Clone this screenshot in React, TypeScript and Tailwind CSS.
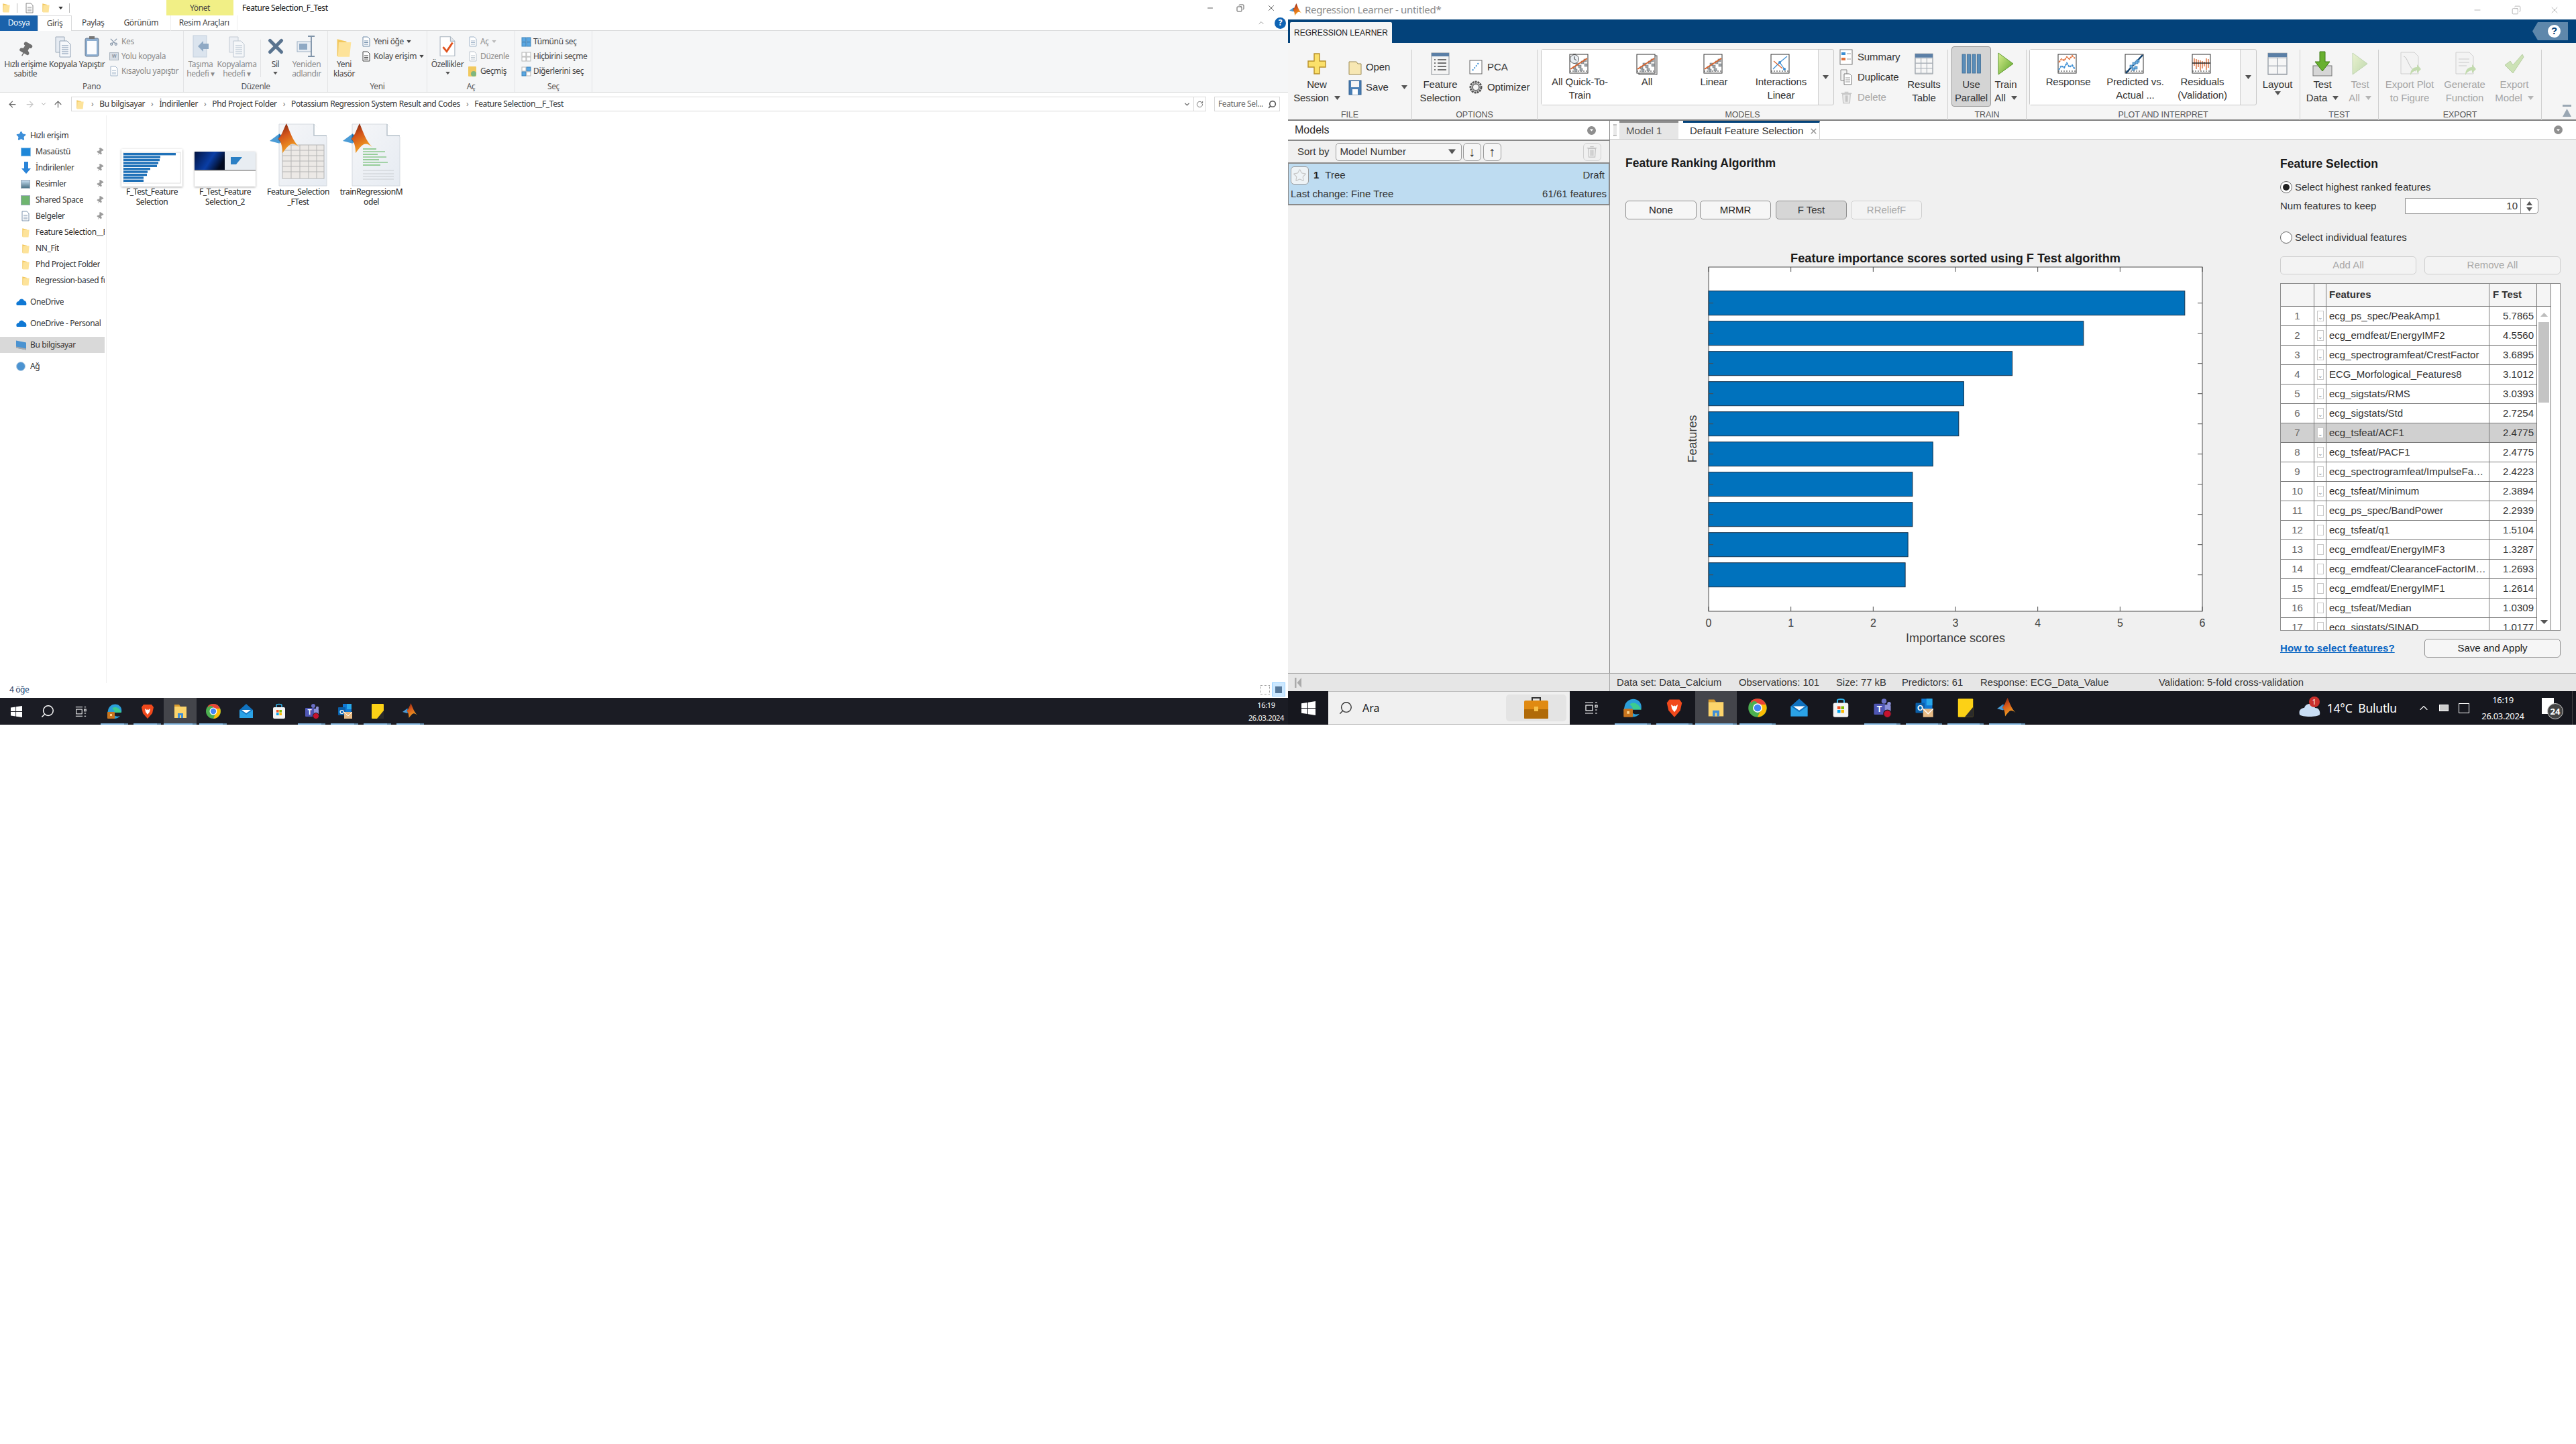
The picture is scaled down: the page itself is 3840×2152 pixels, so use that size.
import type { ReactNode } from "react"
import { Scissors, X, Search, ChevronUp, ChevronDown, ArrowLeft, ArrowRight, ArrowUp, RotateCw, Star, Pin, Minus, Copy } from "lucide-react"

const bars = [5.7865, 4.556, 3.6895, 3.1012, 3.0393, 2.7254, 2.4775, 2.4775, 2.4223, 2.3894]

const features = [
  ["ecg_ps_spec/PeakAmp1", "5.7865"],
  ["ecg_emdfeat/EnergyIMF2", "4.5560"],
  ["ecg_spectrogramfeat/CrestFactor", "3.6895"],
  ["ECG_Morfological_Features8", "3.1012"],
  ["ecg_sigstats/RMS", "3.0393"],
  ["ecg_sigstats/Std", "2.7254"],
  ["ecg_tsfeat/ACF1", "2.4775"],
  ["ecg_tsfeat/PACF1", "2.4775"],
  ["ecg_spectrogramfeat/ImpulseFa…", "2.4223"],
  ["ecg_tsfeat/Minimum", "2.3894"],
  ["ecg_ps_spec/BandPower", "2.2939"],
  ["ecg_tsfeat/q1", "1.5104"],
  ["ecg_emdfeat/EnergyIMF3", "1.3287"],
  ["ecg_emdfeat/ClearanceFactorIM…", "1.2693"],
  ["ecg_emdfeat/EnergyIMF1", "1.2614"],
  ["ecg_tsfeat/Median", "1.0309"],
  ["ecg_sigstats/SINAD", "1.0177"],
]

/* ---------- shared drawings ---------- */

function MatlabLogo({ size }: { size: number }) {
  return (
    <svg width={size} height={size} viewBox="0 0 100 100">
      <defs>
        <linearGradient id="mlPeak" x1="0" y1="0" x2="0.4" y2="1">
          <stop offset="0" stopColor="#6e1d10" />
          <stop offset="0.45" stopColor="#d4551a" />
          <stop offset="1" stopColor="#f5a623" />
        </linearGradient>
      </defs>
      <path d="M0 54 L30 32 L44 46 L30 62 Z" fill="#4b9cd6" />
      <path d="M30 32 L44 46 L36 62 L26 50 Z" fill="#1f6aa8" />
      <path d="M52 0 C62 22 70 52 92 74 C78 62 68 60 58 70 C50 78 44 86 40 92 C40 72 34 52 26 48 C38 38 44 14 52 0 Z" fill="url(#mlPeak)" />
    </svg>
  )
}

function Folder({ size = 20 }: { size?: number }) {
  return (
    <svg width={size} height={size} viewBox="0 0 20 26">
      <path d="M1 2 L13 5 L13 24 L1 24 Z" fill="#f2c75c" />
      <path d="M3 6 L19 6 L17 25 L2 25 Z" fill="#fde39a" />
    </svg>
  )
}

function Caret({ color = "#444", className = "" }: { color?: string; className?: string }) {
  return (
    <svg width="9" height="6" viewBox="0 0 9 6" className={className}>
      <path d="M0 0 H9 L4.5 6 Z" fill={color} />
    </svg>
  )
}

function Doc({ w = 22, h = 28, children }: { w?: number; h?: number; children?: ReactNode }) {
  return (
    <svg width={w} height={h} viewBox="0 0 22 28">
      <path d="M1 1 H15 L21 7 V27 H1 Z" fill="#fff" stroke="#a9b4bf" />
      <path d="M15 1 V7 H21" fill="#e4e8ec" stroke="#a9b4bf" />
      {children}
    </svg>
  )
}

function Trash({ size = 22, color = "#c4c4c4" }: { size?: number; color?: string }) {
  return (
    <svg width={size} height={size} viewBox="0 0 22 22">
      <path d="M5 6 H17 L16 20 H6 Z" fill="#eee" stroke={color} strokeWidth="1.4" />
      <path d="M3 5 H19 M8 3 H14 M9 8 V18 M11 8 V18 M13 8 V18" stroke={color} strokeWidth="1.4" />
    </svg>
  )
}

/* ---------- explorer ribbon icons ---------- */

function PagesIcon({ faded = false }: { faded?: boolean }) {
  return (
    <svg width="26" height="32" viewBox="0 0 26 32" opacity={faded ? 0.55 : 1}>
      <path d="M2 1 H15 L15 24 H2 Z" fill="#e6ebf2" stroke="#9aa8b8" />
      <path d="M8 7 H19 L24 12 V31 H8 Z" fill="#f6f8fb" stroke="#8fa0b3" />
      <path d="M11 14 H21 M11 17 H21 M11 20 H21 M11 23 H21 M11 26 H21" stroke="#7d93ad" />
    </svg>
  )
}

function ClipboardIcon() {
  return (
    <svg width="24" height="34" viewBox="0 0 24 34">
      <rect x="2" y="5" width="20" height="27" rx="2" fill="#8eaed0" stroke="#6c7f94" />
      <rect x="5" y="9" width="14" height="20" fill="#fbfcfe" />
      <path d="M8 6 V2 H16 V6 Z" fill="#777" />
    </svg>
  )
}

function PinIcon({ size = 22, color = "#6f6f6f" }: { size?: number; color?: string }) {
  return <Pin size={size} color={color} fill={color} strokeWidth={1.5} className="rotate-[30deg]" />
}

function MoveIcon({ faded = false }: { faded?: boolean }) {
  return (
    <svg width="28" height="34" viewBox="0 0 28 34" opacity={faded ? 0.8 : 1}>
      <rect x="3" y="1" width="20" height="32" fill="#dbe4ee" stroke="#c4d0dd" />
      <path d="M26 13 V21 H18 V25 L10 17 L18 9 V13 Z" fill="#8fa9c4" />
    </svg>
  )
}

function RenameIcon() {
  return (
    <svg width="30" height="34" viewBox="0 0 30 34">
      <rect x="1" y="10" width="21" height="15" fill="#e9eef4" stroke="#9db0c4" />
      <rect x="4" y="13" width="12" height="9" fill="#8fa9c4" />
      <path d="M22 2 V32 M17 2 H27 M17 32 H27" stroke="#7f93a8" strokeWidth="1.8" fill="none" />
    </svg>
  )
}

function PropsIcon() {
  return (
    <Doc w={24} h={34}>
      <path d="M5 15 L10 21 L18 9" stroke="#e0521d" strokeWidth="2.6" fill="none" />
    </Doc>
  )
}

function GridSelect({ mode }: { mode: "all" | "none" | "invert" }) {
  const cells = mode === "all" ? [1, 1, 1, 1] : mode === "none" ? [0, 0, 0, 0] : [0, 1, 1, 0]
  return (
    <svg width="15" height="15" viewBox="0 0 15 15">
      {cells.map((c, i) => (
        <rect key={i} x={i % 2 ? 8 : 1} y={i < 2 ? 1 : 8} width="6" height="6" fill={c ? "#5aa7e2" : "#fff"} stroke={c ? "#3f84bb" : "#b5b5b5"} />
      ))}
    </svg>
  )
}

function SmallDoc({ color = "#9fb3c8" }: { color?: string }) {
  return (
    <svg width="14" height="16" viewBox="0 0 14 16">
      <path d="M2 1 H9 L12 4 V15 H2 Z" fill="#fff" stroke={color} />
      <path d="M4 7 H10 M4 9.5 H10 M4 12 H10" stroke={color} />
    </svg>
  )
}

/* ---------- explorer parts ---------- */

function BigBtn({ w, icon, lines, muted = false, caret = false }: { w: string; icon: ReactNode; lines: string[]; muted?: boolean; caret?: boolean }) {
  return (
    <div className={`${w} flex flex-col items-center`}>
      <div className="h-[37px] flex items-end justify-center pb-[2px]">{icon}</div>
      <div className={`flex flex-col items-center mt-[1px] leading-[13.5px] whitespace-nowrap ${muted ? "text-[#8b8b8b]" : "text-[#444]"}`}>
        {lines.map((l, i) => (
          <span key={i}>{l}</span>
        ))}
        {caret && <Caret color="#555" className="mt-[3px] scale-75" />}
      </div>
    </div>
  )
}

function SmallBtn({ icon, text, muted = false, caret = false }: { icon: ReactNode; text: string; muted?: boolean; caret?: boolean }) {
  return (
    <div className={`h-[22px] flex items-center whitespace-nowrap ${muted ? "text-[#8b8b8b]" : "text-[#444]"}`}>
      <span className="w-[18px] flex items-center">{icon}</span>
      {text}
      {caret && <Caret color={muted ? "#bbb" : "#444"} className="ml-[3px] scale-75" />}
    </div>
  )
}

function RibbonGroup({ w, label, children }: { w: string; label: string; children: ReactNode }) {
  return (
    <div className={`${w} h-full border-r border-[#e2e3e5] flex flex-col shrink-0`}>
      <div className="h-[76px] flex pt-[5px]">{children}</div>
      <div className="text-center text-[#555] leading-[14px]">{label}</div>
    </div>
  )
}

function NavRow({ icon, text, indent = false, pin = false, active = false }: { icon: ReactNode; text: string; indent?: boolean; pin?: boolean; active?: boolean }) {
  return (
    <div className={`h-[24px] w-[156px] flex items-center ${indent ? "pl-[31px]" : "pl-[24px]"} ${active ? "bg-[#d9d9d9]" : ""}`}>
      <span className={`${indent ? "w-[22px]" : "w-[21px]"} shrink-0 flex items-center`}>{icon}</span>
      <span className="overflow-hidden whitespace-nowrap text-[#333] leading-[24px]">{text}</span>
      {pin && <span className="ml-auto mr-[1px] flex"><PinIcon size={12} color="#9a9a9a" /></span>}
    </div>
  )
}

function CloudIcon({ size = 16 }: { size?: number }) {
  return (
    <svg width={size} height={size} viewBox="0 0 16 16">
      <path d="M1 13 C-1 9 2 7 4 7 C5 3 10 2 12 6 C15 6 16 10 15 13 Z" fill="#0f78d4" />
    </svg>
  )
}

function FileThumbOne() {
  return (
    <svg width="91" height="56" viewBox="0 0 91 56" className="shadow-[0_1px_3px_rgba(0,0,0,0.35)] bg-white">
      <rect x="3" y="5" width="85" height="46" fill="none" stroke="#ddd" />
      {[78, 55, 54, 52, 50, 40, 36, 35, 30, 30].map((w, i) => (
        <rect key={i} x="3" y={6 + i * 4.4} width={w} height="3.4" fill="#1f71b8" />
      ))}
    </svg>
  )
}

function FileThumbTwo() {
  return (
    <svg width="91" height="52" viewBox="0 0 91 52" className="shadow-[0_1px_3px_rgba(0,0,0,0.35)] bg-white">
      <defs>
        <linearGradient id="thumbBlue" x1="0" y1="0" x2="1" y2="0.4">
          <stop offset="0" stopColor="#02133f" />
          <stop offset="0.6" stopColor="#0a3ea6" />
          <stop offset="1" stopColor="#020a20" />
        </linearGradient>
      </defs>
      <rect x="0" y="0" width="45" height="28" fill="url(#thumbBlue)" />
      <rect x="45" y="0" width="46" height="28" fill="#e8edf2" />
      <path d="M54 8 H71 L62 19 H54 Z" fill="#2b80c5" />
      <rect x="0" y="27" width="91" height="1.5" fill="#8a8a8a" />
    </svg>
  )
}

function MatlabFile({ table }: { table: boolean }) {
  return (
    <div className="relative w-[86px] h-[94px]">
      <svg width="86" height="94" viewBox="0 0 86 94">
        <defs>
          <linearGradient id="pageFill" x1="0" y1="0" x2="1" y2="1">
            <stop offset="0" stopColor="#f5f6f8" />
            <stop offset="1" stopColor="#e6ebf2" />
          </linearGradient>
        </defs>
        <path d="M14 1 H66 L85 20 V93 H14 Z" fill="url(#pageFill)" stroke="#d5dae0" />
        <path d="M66 1 V18 H85" fill="#fff" stroke="#b8c2cc" strokeWidth="1.5" />
        {table ? (
          <g stroke="#b5b5b5" fill="#ece9e6">
            <rect x="19" y="32" width="62" height="50" />
            {[40, 48, 56, 64, 72].map((y) => (
              <path key={y} d={`M19 ${y} H81`} />
            ))}
            {[32, 45, 58, 70].map((x) => (
              <path key={x} d={`M${x} 32 V82`} />
            ))}
          </g>
        ) : (
          <g>
            {[38, 42, 46, 50, 54, 58, 62].map((y, i) => (
              <path key={y} d={`M30 ${y} H${50 + (i * 13) % 24}`} stroke="#5db65d" strokeWidth="1.2" />
            ))}
            {[70, 75, 79, 83].map((y) => (
              <path key={y} d={`M30 ${y} H76`} stroke="#c9cdd2" strokeWidth="1.2" />
            ))}
          </g>
        )}
      </svg>
      <div className="absolute left-0 top-0">
        <MatlabLogo size={48} />
      </div>
    </div>
  )
}

function FileCell({ thumb, lines }: { thumb: ReactNode; lines: string[] }) {
  return (
    <div className="w-[109px] shrink-0 flex flex-col items-center">
      <div className="h-[95px] flex items-end justify-center">{thumb}</div>
      <div className="flex flex-col items-center leading-[15px] text-[#222] whitespace-nowrap">
        {lines.map((l) => (
          <span key={l}>{l}</span>
        ))}
      </div>
    </div>
  )
}

function Explorer() {
  return (
    <div className="w-[1920px] h-[1040px] flex flex-col font-['Noto_Sans',sans-serif] text-[12px] tracking-[-0.38px]">
      {/* title row */}
      <div className="h-[23px] flex items-center relative shrink-0">
        <div className="pl-[2px] w-[248px] flex items-center gap-[5px]">
          <Folder size={15} />
          <span className="w-px h-[14px] bg-[#bbb] ml-[3px]" />
          <span className="ml-[6px]"><SmallDoc color="#888" /></span>
          <span className="ml-[5px]"><Folder size={15} /></span>
          <Caret color="#333" className="ml-[5px] scale-75" />
          <span className="w-px h-[14px] bg-[#bbb] ml-[3px]" />
        </div>
        <div className="w-[100px] h-[23px] bg-[#f1ef86] flex items-center justify-center text-[#444]">Yönet</div>
        <div className="ml-[13px] text-[#111]">Feature Selection_F_Test</div>
        <div className="ml-auto flex items-center text-[#111]">
          <Minus size={12} strokeWidth={1.4} />
          <Copy size={12} strokeWidth={1.4} className="ml-[33px] -scale-x-100" />
          <X size={14} strokeWidth={1.2} className="ml-[33px] mr-[18px]" />
        </div>
      </div>

      {/* tab row */}
      <div className="h-[23px] flex items-center shrink-0 border-b border-[#dadbdc] text-[#444]">
        <div className="w-[56px] h-[23px] bg-[#1a62ab] text-white flex items-center justify-center">Dosya</div>
        <div className="w-[51px] h-[23px] bg-white border-x border-t border-[#dadbdc] flex items-center justify-center">Giriş</div>
        <div className="ml-[15px]">Paylaş</div>
        <div className="ml-[29px]">Görünüm</div>
        <div className="ml-[18px] w-[100px] h-[23px] border-l border-r border-[#eee] flex items-center justify-center">Resim Araçları</div>
        <ChevronUp size={12} color="#999" className="ml-auto mr-[14px]" />
        <span className="w-[17px] h-[17px] mr-[3px] rounded-full bg-[#0f63b3] text-white font-bold flex items-center justify-center text-[12px]">?</span>
      </div>

      {/* ribbon */}
      <div className="h-[92px] bg-[#f5f6f7] border-b border-[#dadbdc] flex shrink-0">
        <RibbonGroup w="w-[274px]" label="Pano">
          <div className="w-[5px]" />
          <BigBtn w="w-[66px]" icon={<PinIcon size={24} />} lines={["Hızlı erişime", "sabitle"]} />
          <BigBtn w="w-[46px]" icon={<PagesIcon />} lines={["Kopyala"]} />
          <BigBtn w="w-[40px]" icon={<ClipboardIcon />} lines={["Yapıştır"]} />
          <div className="ml-[6px]">
            <SmallBtn muted icon={<Scissors size={13} color="#7d8ea3" className="-rotate-90" />} text="Kes" />
            <SmallBtn muted icon={<span className="w-[14px] h-[12px] bg-[#d7dde5] border border-[#a9b4bf] text-[7px] leading-[10px] text-center text-[#5a6b7d]">W</span>} text="Yolu kopyala" />
            <SmallBtn muted icon={<SmallDoc />} text="Kısayolu yapıştır" />
          </div>
        </RibbonGroup>
        <RibbonGroup w="w-[215px]" label="Düzenle">
          <BigBtn muted w="w-[50px]" icon={<MoveIcon />} lines={["Taşıma", "hedefi ▾"]} />
          <BigBtn muted w="w-[58px]" icon={<PagesIcon faded />} lines={["Kopyalama", "hedefi ▾"]} />
          <div className="w-px h-[56px] bg-[#e2e3e5] ml-[6px] mt-[8px]" />
          <BigBtn w="w-[43px]" icon={<X size={34} strokeWidth={3.6} color="#59738f" />} lines={["Sil"]} caret />
          <BigBtn muted w="w-[50px]" icon={<RenameIcon />} lines={["Yeniden", "adlandır"]} />
        </RibbonGroup>
        <RibbonGroup w="w-[148px]" label="Yeni">
          <BigBtn w="w-[48px]" icon={<Folder size={30} />} lines={["Yeni", "klasör"]} />
          <div className="ml-[2px]">
            <SmallBtn caret icon={<SmallDoc color="#6d8aa8" />} text="Yeni öğe" />
            <SmallBtn caret icon={<SmallDoc color="#444" />} text="Kolay erişim" />
          </div>
        </RibbonGroup>
        <RibbonGroup w="w-[131px]" label="Aç">
          <BigBtn w="w-[60px]" icon={<PropsIcon />} lines={["Özellikler"]} caret />
          <div className="ml-[1px]">
            <SmallBtn muted caret icon={<SmallDoc />} text="Aç" />
            <SmallBtn muted icon={<SmallDoc color="#b8c2cc" />} text="Düzenle" />
            <SmallBtn icon={<span className="w-[12px] h-[15px] bg-[#f1c95f] block rounded-[1px]"><span className="block w-[8px] h-[8px] mt-[7px] ml-[4px] rounded-full bg-[#7fb77e]" /></span>} text="Geçmiş" />
          </div>
        </RibbonGroup>
        <RibbonGroup w="w-[115px]" label="Seç">
          <div className="pl-[9px]">
            <SmallBtn icon={<GridSelect mode="all" />} text="Tümünü seç" />
            <SmallBtn icon={<GridSelect mode="none" />} text="Hiçbirini seçme" />
            <SmallBtn icon={<GridSelect mode="invert" />} text="Diğerlerini seç" />
          </div>
        </RibbonGroup>
      </div>

      {/* address row */}
      <div className="h-[34px] flex items-center shrink-0 text-[#333]">
        <div className="w-[106px] flex items-center text-[#666]">
          <ArrowLeft size={15} className="ml-[11px]" />
          <ArrowRight size={15} color="#c6c6c6" className="ml-[11px]" />
          <ChevronDown size={10} color="#999" className="ml-[8px]" />
          <ArrowUp size={15} className="ml-[9px]" />
        </div>
        <div className="w-[1692px] h-[22px] border border-[#d9d9d9] flex items-center pl-[5px]">
          <Folder size={15} />
          <span className="mx-[9px] text-[#777]">›</span>Bu bilgisayar
          <span className="mx-[9px] text-[#777]">›</span>İndirilenler
          <span className="mx-[9px] text-[#777]">›</span>Phd Project Folder
          <span className="mx-[9px] text-[#777]">›</span>Potassium Regression System Result and Codes
          <span className="mx-[9px] text-[#777]">›</span>Feature Selection__F_Test
          <ChevronDown size={11} color="#666" strokeWidth={3} className="ml-auto mr-[4px]" />
          <span className="w-[18px] h-[20px] border-l border-[#d9d9d9] flex items-center justify-center">
            <RotateCw size={11} color="#666" />
          </span>
        </div>
        <div className="ml-[12px] w-[98px] h-[22px] border border-[#d9d9d9] flex items-center pl-[5px] text-[#666]">
          Feature Sel...
          <Search size={13} color="#555" strokeWidth={3} className="ml-auto mr-[4px] -scale-x-100" />
        </div>
      </div>

      {/* body */}
      <div className="flex-1 flex min-h-0">
        <div className="w-[159px] h-[846px] border-r border-[#f0f0f0] pt-[18px] shrink-0">
          <NavRow text="Hızlı erişim" icon={<Star size={15} color="#3d8fd9" fill="#3d8fd9" />} />
          <NavRow indent pin text="Masaüstü" icon={<span className="w-[15px] h-[13px] bg-[#1f87d8] block border border-[#8cc0e8]" />} />
          <NavRow indent pin text="İndirilenler" icon={<ArrowDownBlue />} />
          <NavRow indent pin text="Resimler" icon={<span className="w-[14px] h-[13px] bg-gradient-to-b from-[#c8dff2] to-[#4d7488] block border border-[#9aa8b8]" />} />
          <NavRow indent pin text="Shared Space" icon={<span className="w-[14px] h-[15px] bg-[#6fb56f] block border border-[#9aa8b8]" />} />
          <NavRow indent pin text="Belgeler" icon={<SmallDoc color="#7d93ad" />} />
          <NavRow indent text="Feature Selection__F" icon={<Folder size={15} />} />
          <NavRow indent text="NN_Fit" icon={<Folder size={15} />} />
          <NavRow indent text="Phd Project Folder" icon={<Folder size={15} />} />
          <NavRow indent text="Regression-based fu" icon={<Folder size={15} />} />
          <div className="h-[8px]" />
          <NavRow text="OneDrive" icon={<CloudIcon />} />
          <div className="h-[8px]" />
          <NavRow text="OneDrive - Personal" icon={<CloudIcon />} />
          <div className="h-[8px]" />
          <NavRow active text="Bu bilgisayar" icon={<span className="w-[15px] h-[11px] bg-[#4b93d1] block skew-y-12 border-b-2 border-[#aaa]" />} />
          <div className="h-[8px]" />
          <NavRow text="Ağ" icon={<span className="w-[14px] h-[14px] rounded-full bg-[#4b93d1] block border border-[#b3cde3]" />} />
        </div>
        <div className="flex-1 relative">
          <div className="flex pl-[13px] pt-[11px]">
            <FileCell thumb={<FileThumbOne />} lines={["F_Test_Feature", "Selection"]} />
            <FileCell thumb={<FileThumbTwo />} lines={["F_Test_Feature", "Selection_2"]} />
            <FileCell thumb={<MatlabFile table />} lines={["Feature_Selection", "_FTest"]} />
            <FileCell thumb={<MatlabFile table={false} />} lines={["trainRegressionM", "odel"]} />
          </div>
        </div>
      </div>

      {/* status */}
      <div className="h-[25px] flex items-center shrink-0 -mt-[25px] relative">
        <span className="ml-[14px] text-[#24416b]">4 öğe</span>
        <span className="ml-auto mr-[4px] flex items-center gap-[3px]">
          <span className="w-[14px] h-[14px] border border-dotted border-[#999]" />
          <span className="w-[20px] h-[21px] bg-[#cce8ff] border border-[#99d1ff] flex items-center justify-center">
            <span className="w-[10px] h-[10px] bg-[#56789a]" />
          </span>
        </span>
      </div>
    </div>
  )
}

function ArrowDownBlue() {
  return (
    <svg width="16" height="20" viewBox="0 0 16 20">
      <path d="M5 1 H11 V11 H15 L8 19 L1 11 H5 Z" fill="#2a84d8" />
    </svg>
  )
}

/* ---------- taskbar ---------- */

function WinLogo({ size }: { size: number }) {
  return (
    <svg width={size} height={size} viewBox="0 0 20 20">
      <path d="M0 3 L8.5 1.8 V9.5 H0 Z M9.5 1.6 L20 0 V9.5 H9.5 Z M0 10.5 H8.5 V18.2 L0 17 Z M9.5 10.5 H20 V20 L9.5 18.4 Z" fill="#fff" />
    </svg>
  )
}

function TaskViewIcon({ size }: { size: number }) {
  return (
    <svg width={size} height={size} viewBox="0 0 20 20" fill="none" stroke="#fff" strokeWidth="1.2">
      <path d="M1 2 H13 M1 18 H13" />
      <rect x="2" y="6" width="10" height="8" />
      <path d="M16 2 H19 M16 6 H19 V9 H16 Z M16 13 H19 M16 18 H19" />
    </svg>
  )
}

function AppIcon({ name, size }: { name: string; size: number }) {
  if (name === "edge")
    return (
      <svg width={size} height={size} viewBox="0 0 24 24">
        <path d="M2 11 C3 3 11 0 16 2 C21 4 23 8 22 14 L10 14 C10 18 14 21 20 19 C16 24 8 24 4 20 C1 17 1 14 2 11 Z" fill="#2b9fd9" />
        <path d="M8 8 C12 4 19 6 22 14 L12 14 C12 11 10 9 8 8 Z" fill="#3ccb8f" />
        <rect x="1" y="13" width="11" height="10" rx="1" fill="#c8741e" />
        <rect x="5" y="16" width="3" height="3" fill="#fbd38a" />
      </svg>
    )
  if (name === "brave")
    return (
      <svg width={size} height={size} viewBox="0 0 24 24">
        <path d="M6 2 H18 L21 6 L19 15 L12 23 L5 15 L3 6 Z" fill="#f1491c" />
        <path d="M8 8 L11 10 L12 9 L13 10 L16 8 L15 13 L12 17 L9 13 Z" fill="#fff" />
      </svg>
    )
  if (name === "explorer")
    return (
      <svg width={size} height={size} viewBox="0 0 24 24">
        <path d="M3 2 H10 L12 5 H3 Z" fill="#d89a2d" />
        <rect x="3" y="5" width="18" height="17" fill="#fcd46b" />
        <rect x="8" y="15" width="8" height="7" fill="#3f8fd8" />
        <rect x="11" y="18" width="2" height="4" fill="#fcd46b" />
      </svg>
    )
  if (name === "chrome")
    return (
      <svg width={size} height={size} viewBox="0 0 24 24">
        <circle cx="12" cy="12" r="11" fill="#4caf50" />
        <path d="M12 1 A11 11 0 0 1 22 8 H12 A4 4 0 0 0 4 8 L4 4 A11 11 0 0 1 12 1 Z" fill="#ea4335" />
        <path d="M22 8 A11 11 0 0 1 12 23 L16 14 L12 8 Z" fill="#fbbc05" />
        <circle cx="12" cy="12" r="5.5" fill="#fff" />
        <circle cx="12" cy="12" r="4.2" fill="#4285f4" />
      </svg>
    )
  if (name === "mail")
    return (
      <svg width={size} height={size} viewBox="0 0 24 24">
        <path d="M2 10 L12 1 L22 10 V22 H2 Z" fill="#1072bf" />
        <path d="M2 10 L12 17 L22 10 V22 H2 Z" fill="#2ba2e6" />
        <path d="M5 10 H19 L12 15 Z" fill="#fff" />
      </svg>
    )
  if (name === "store")
    return (
      <svg width={size} height={size} viewBox="0 0 24 24">
        <path d="M8 7 V3 C8 1 16 1 16 3 V7" stroke="#30b0e8" strokeWidth="1.6" fill="none" />
        <rect x="3" y="6" width="18" height="17" rx="2" fill="#f4f4f4" />
        <rect x="8" y="10" width="3.6" height="3.6" fill="#f25022" />
        <rect x="12.4" y="10" width="3.6" height="3.6" fill="#7fba00" />
        <rect x="8" y="14.4" width="3.6" height="3.6" fill="#00a4ef" />
        <rect x="12.4" y="14.4" width="3.6" height="3.6" fill="#ffb900" />
      </svg>
    )
  if (name === "teams")
    return (
      <svg width={size} height={size} viewBox="0 0 24 24">
        <circle cx="14" cy="4" r="3" fill="#6a6fc4" />
        <circle cx="20" cy="7" r="2.2" fill="#8d91da" />
        <rect x="12" y="8" width="10" height="10" rx="2" fill="#8d91da" />
        <rect x="2" y="7" width="13" height="13" rx="1" fill="#4f56b3" />
        <text x="8.5" y="17" fontSize="10" fontWeight="700" fill="#fff" textAnchor="middle" fontFamily="Liberation Sans">T</text>
        <circle cx="18" cy="19" r="4.6" fill="#c4122f" stroke="#1b1b22" />
      </svg>
    )
  if (name === "outlook")
    return (
      <svg width={size} height={size} viewBox="0 0 24 24">
        <rect x="9" y="1" width="13" height="16" fill="#0f78d4" />
        <rect x="15" y="1" width="7" height="8" fill="#28a8ea" />
        <rect x="2" y="6" width="11" height="12" rx="1" fill="#0b5fa8" />
        <text x="7.5" y="15.5" fontSize="9" fontWeight="700" fill="#fff" textAnchor="middle" fontFamily="Liberation Sans">O</text>
        <rect x="11" y="13" width="12" height="10" fill="#e8bb85" />
        <path d="M11 13 L17 19 L23 13" stroke="#fff" fill="none" />
      </svg>
    )
  if (name === "sticky")
    return (
      <svg width={size} height={size} viewBox="0 0 24 24">
        <rect x="3" y="1" width="18" height="22" rx="1" fill="#fcd116" />
        <path d="M21 11 V23 H11 Z" fill="#2b2b2b" />
      </svg>
    )
  return <MatlabLogo size={size} />
}

const appSet: [string, boolean][] = [
  ["edge", true],
  ["brave", true],
  ["explorer", true],
  ["chrome", true],
  ["mail", false],
  ["store", false],
  ["teams", true],
  ["outlook", true],
  ["sticky", true],
  ["matlab", true],
]

function AppSlot({ name, on, size, w }: { name: string; on: boolean; size: number; w: string }) {
  return (
    <div className={`${w} h-full relative flex items-center justify-center shrink-0 ${name === "explorer" ? "bg-[#44454b]" : ""}`}>
      <AppIcon name={name} size={size} />
      {on && <span className={`absolute bottom-0 h-[2px] bg-[#7fb3dc] border-r-[6px] border-[#5c87a8] ${name === "explorer" ? "inset-x-0" : "inset-x-[4px]"}`} />}
    </div>
  )
}

function LeftTaskbar() {
  return (
    <div className="h-[40px] bg-[#1b1c24] flex items-center text-white font-['Noto_Sans',sans-serif]">
      <div className="w-[48px] flex justify-center"><WinLogo size={17} /></div>
      <div className="w-[46px] flex justify-center"><Search size={22} strokeWidth={1.6} className="-scale-x-100" /></div>
      <div className="w-[52px] flex justify-center"><TaskViewIcon size={17} /></div>
      <div className="flex h-full">
        {appSet.map(([n, on]) => (
          <AppSlot key={n} name={n} on={on} size={24} w="w-[49px]" />
        ))}
      </div>
      <div className="ml-auto w-[65px] flex flex-col items-center text-[11px] leading-[19px] tracking-[-0.3px]">
        <span>16:19</span>
        <span>26.03.2024</span>
      </div>
    </div>
  )
}

function RightTaskbar() {
  return (
    <div className="h-[50px] bg-[#16171e] flex items-center text-white font-['Noto_Sans',sans-serif]">
      <div className="w-[60px] flex justify-center"><WinLogo size={21} /></div>
      <div className="w-[360px] h-full bg-[#f0f0f0] border-y border-[#bdbdbd] flex items-center text-[#222]">
        <Search size={22} strokeWidth={1.5} color="#333" className="ml-[15px] -scale-x-100" />
        <span className="ml-[14px] text-[16px]">Ara</span>
        <span className="ml-auto mr-[5px] w-[90px] h-[40px] bg-[#e4e4e4] rounded-[5px] flex items-center justify-center">
          <svg width="38" height="34" viewBox="0 0 38 34">
            <path d="M13 6 V2 H25 V6" stroke="#333" strokeWidth="2" fill="none" />
            <rect x="1" y="6" width="36" height="27" rx="2" fill="#e08a12" />
            <rect x="1" y="19" width="36" height="14" rx="1" fill="#b06a08" />
            <rect x="16" y="15" width="6" height="7" fill="#f7c14a" />
          </svg>
        </span>
      </div>
      <div className="w-[63px] flex justify-center"><TaskViewIcon size={20} /></div>
      <div className="flex h-full">
        {appSet.map(([n, on]) => (
          <AppSlot key={n} name={n} on={on} size={30} w="w-[62px]" />
        ))}
      </div>
      <div className="ml-auto flex items-center h-full">
        <div className="relative w-[32px] h-[28px]">
          <svg width="32" height="28" viewBox="0 0 32 28">
            <path d="M1 24 C-1 17 4 14 8 14 C10 6 22 6 24 14 C30 14 32 19 31 24 C28 28 4 28 1 24 Z" fill="#c9def5" />
          </svg>
          <span className="absolute -top-[3px] left-[15px] w-[16px] h-[16px] rounded-full bg-[#c9302c] text-[11px] leading-[16px] text-center">1</span>
        </div>
        <span className="ml-[10px] text-[17.5px] whitespace-pre tracking-[-0.2px]">14°C  Bulutlu</span>
        <ChevronUp size={20} strokeWidth={1.3} className="ml-[30px]" />
        <span className="ml-[13px] w-[14px] h-[10px] bg-[#ccc] border border-white" />
        <span className="ml-[15px] w-[16px] h-[15px] border border-white" />
        <div className="ml-[14px] w-[72px] flex flex-col items-center text-[13px] leading-[24px] tracking-[-0.3px]">
          <span>16:19</span>
          <span>26.03.2024</span>
        </div>
        <div className="relative ml-[22px] w-[32px] h-[30px] mr-[13px]">
          <span className="absolute left-0 top-0 w-[18px] h-[24px] bg-white" />
          <span className="absolute left-[8px] top-[8px] w-[24px] h-[24px] rounded-full bg-[#444] border border-[#ccc] text-[13px] font-bold leading-[22px] text-center">24</span>
        </div>
        <span className="w-px h-full bg-[#444]" />
        <span className="w-[5px]" />
      </div>
    </div>
  )
}

/* ---------- toolstrip icons ---------- */

function PlotThumb({ kind }: { kind: string }) {
  const scatter = kind === "scatter" || kind === "quick" || kind === "all"
  return (
    <svg width="32" height="32" viewBox="0 0 32 32">
      {kind === "all" && <rect x="4" y="3" width="27" height="28" fill="#eee" stroke="#555" />}
      <rect x="1" y="1" width="27" height="28" fill="#fff" stroke="#333" />
      <path d="M1 26 H28" stroke="#333" strokeDasharray="2 2" />
      {scatter && (
        <g>
          {[[6, 19], [10, 14], [14, 17], [18, 11], [22, 8], [23, 15], [8, 23], [16, 22]].map(([x, y], i) => (
            <rect key={i} x={x} y={y} width="4" height="4" fill="#9ea6ad" stroke="#666" strokeWidth="0.5" />
          ))}
          <path d="M2 23 L27 7" stroke="#d9622b" strokeWidth="1.8" />
        </g>
      )}
      {kind === "quick" && (
        <g>
          <circle cx="8" cy="8" r="6.5" fill="#e8edf2" stroke="#555" />
          <path d="M8 4 V8 L11 10" stroke="#333" fill="none" />
          <path d="M6 0.5 H10" stroke="#555" strokeWidth="1.5" />
        </g>
      )}
      {kind === "interact" && (
        <g>
          <path d="M4 23 L14 13 L21 23 M14 13 L25 4" stroke="#3b8ed3" strokeWidth="1.2" fill="none" />
          <path d="M5 11 L18 22" stroke="#d9622b" strokeWidth="1.2" />
          <circle cx="14" cy="13" r="2" fill="#3b8ed3" />
          <circle cx="21" cy="23" r="2" fill="#3b8ed3" />
        </g>
      )}
      {kind === "response" && (
        <g>
          <path d="M2 13 L6 8 L10 10 L14 5 L18 8 L22 3 L26 7" stroke="#e0703a" strokeWidth="2" fill="none" strokeDasharray="3 1" />
          <path d="M2 24 L6 18 L10 21 L14 14 L18 20 L22 17 L26 23" stroke="#3b8ed3" strokeWidth="2" fill="none" strokeDasharray="3 1" />
        </g>
      )}
      {kind === "pred" && (
        <g>
          <path d="M2 29 L27 2" stroke="#0c3d6b" strokeWidth="2.4" />
          {[[8, 17], [12, 13], [15, 19], [18, 9], [11, 21], [16, 11]].map(([x, y], i) => (
            <rect key={i} x={x} y={y} width="4" height="4" fill="#6daee0" stroke="#2a6ea8" strokeWidth="0.6" />
          ))}
        </g>
      )}
      {kind === "resid" && (
        <g stroke="#d9622b" strokeWidth="1.3">
          {[4, 7, 10, 13, 16, 19, 22, 25].map((x, i) => (
            <path key={x} d={`M${x} ${7 + (i * 7) % 6} V${18 + (i * 5) % 8}`} />
          ))}
          <path d="M1 14 H28" stroke="#222" strokeWidth="1.5" />
        </g>
      )}
    </svg>
  )
}

function WindowGrid({ size = 30, rows = 3, cols = 3 }: { size?: number; rows?: number; cols?: number }) {
  const cells = []
  for (let r = 0; r < rows; r++) for (let c = 0; c < cols; c++) cells.push([r, c])
  const cw = 28 / cols
  const ch = 24 / rows
  return (
    <svg width={size} height={size * 1.15} viewBox="0 0 30 34">
      <rect x="1" y="1" width="28" height="32" fill="#f6f6f6" stroke="#8a8f95" />
      <rect x="1" y="1" width="28" height="6" fill="#5b7fa6" />
      {cells.map(([r, c]) => (
        <rect key={`${r}${c}`} x={1 + c * cw} y={8 + r * ch} width={cw} height={ch} fill="none" stroke="#a9b0b8" />
      ))}
    </svg>
  )
}

function ListDoc() {
  return (
    <svg width="28" height="34" viewBox="0 0 28 34">
      <rect x="1" y="1" width="26" height="32" fill="#f4f4f4" stroke="#8a8f95" />
      <rect x="1" y="1" width="26" height="5" fill="#5b7fa6" />
      {[11, 16, 21, 26].map((y) => (
        <path key={y} d={`M5 ${y} H7 M10 ${y} H23`} stroke="#444" strokeWidth="1.6" />
      ))}
    </svg>
  )
}

function PlayIcon({ faded = false }: { faded?: boolean }) {
  return (
    <svg width="26" height="36" viewBox="0 0 26 36" opacity={faded ? 0.35 : 1}>
      <defs>
        <linearGradient id="playFill" x1="0" y1="0" x2="1" y2="1">
          <stop offset="0" stopColor="#d8ee8e" />
          <stop offset="1" stopColor="#5aa42a" />
        </linearGradient>
      </defs>
      <path d="M2 2 L24 18 L2 34 Z" fill="url(#playFill)" stroke="#5e9a2e" />
    </svg>
  )
}

function ExportIcon({ plot }: { plot: boolean }) {
  return (
    <svg width="34" height="38" viewBox="0 0 34 38" opacity="0.4">
      <path d="M4 2 H24 L30 8 V34 H4 Z" fill="#f2f2f2" stroke="#999" />
      {plot ? <path d="M8 8 C14 8 16 28 26 30" stroke="#777" fill="none" /> : <path d="M8 12 H24 M8 17 H24 M8 22 H20" stroke="#888" />}
      <path d="M18 36 C18 28 22 24 28 24 V20 L34 27 L28 33 V29 C24 29 21 31 18 36 Z" fill="#7ab648" />
    </svg>
  )
}

/* ---------- toolstrip parts ---------- */

function ToolBig({ w, icon, lines, disabled = false, caret = false }: { w: string; icon: ReactNode; lines: ReactNode[]; disabled?: boolean; caret?: boolean }) {
  return (
    <div className={`${w} flex flex-col items-center shrink-0 ${disabled ? "text-[#a6a6a6]" : "text-[#333]"}`}>
      <div className="h-[42px] flex items-center justify-center">{icon}</div>
      {lines.map((l, i) => (
        <div key={i} className="leading-[20px] whitespace-nowrap flex items-center gap-[8px]">
          {l}
          {caret && i === lines.length - 1 && <Caret color={disabled ? "#b5b5b5" : "#555"} />}
        </div>
      ))}
    </div>
  )
}

function ToolSmall({ w, icon, text, disabled = false }: { w: string; icon: ReactNode; text: string; disabled?: boolean }) {
  return (
    <div className={`h-[30px] flex items-center whitespace-nowrap ${disabled ? "text-[#a6a6a6]" : "text-[#333]"}`}>
      <span className={`${w} flex justify-center pr-[6px]`}>{icon}</span>
      {text}
    </div>
  )
}

function Gallery({ whiteW, outerW, items }: { whiteW: string; outerW: string; items: { icon: ReactNode; lines: string[] }[] }) {
  return (
    <div className={`${outerW} h-[84px] -mt-[1px] border border-[#c8c8c8] rounded-[3px] flex shrink-0`}>
      <div className={`${whiteW} bg-white border-r border-[#d0d0d0] flex pl-[7px] pt-[5px] shrink-0`}>
        {items.map((it) => (
          <div key={it.lines.join()} className="w-[100px] flex flex-col items-center text-[#333] shrink-0">
            <div className="h-[33px] flex items-center">{it.icon}</div>
            {it.lines.map((l) => (
              <div key={l} className="leading-[20px] whitespace-nowrap">{l}</div>
            ))}
          </div>
        ))}
      </div>
      <div className="flex-1 flex justify-center pt-[38px]"><Caret color="#555" /></div>
    </div>
  )
}

function ToolSection({ w, label, noBorder = false, children }: { w: string; label: string; noBorder?: boolean; children: ReactNode }) {
  return (
    <div className={`${w} mt-[10px] h-[105px] flex flex-col shrink-0 ${noBorder ? "" : "border-r border-[#cfcfcf]"}`}>
      <div className="h-[90px] flex">{children}</div>
      <div className="h-[15px] text-center text-[12.5px] leading-[15px] text-[#555]">{label}</div>
    </div>
  )
}

function Toolstrip() {
  return (
    <div className="h-[116px] bg-[#f5f5f5] border-b-2 border-[#808080] flex shrink-0 text-[15px] tracking-[-0.1px]">
      <ToolSection w="w-[185px]" label="FILE">
        <ToolBig
          w="w-[86px]"
          caret
          lines={["New", "Session"]}
          icon={
            <svg width="30" height="34" viewBox="0 0 30 34">
              <path d="M11 2 H19 V13 H28 V22 H19 V32 H11 V22 H2 V13 H11 Z" fill="#fbe06a" stroke="#b8902a" strokeWidth="1.4" />
            </svg>
          }
        />
        <div className="pt-[11px] ml-[4px]">
          <ToolSmall w="w-[26px]" text="Open" icon={<svg width="20" height="24" viewBox="0 0 20 24"><path d="M1 4 H12 L14 7 H19 V23 H1 Z" fill="#f7e7b3" stroke="#9c8a55" /></svg>} />
          <div className="flex items-center">
            <ToolSmall w="w-[26px]" text="Save" icon={<svg width="20" height="24" viewBox="0 0 20 24"><rect x="1" y="2" width="18" height="21" fill="#4a7fb5" stroke="#2e5c8c" /><rect x="4" y="3" width="12" height="9" fill="#f5f5f5" /><rect x="6" y="15" width="8" height="8" fill="#fff" /></svg>} />
            <Caret color="#555" className="ml-[19px]" />
          </div>
        </div>
      </ToolSection>
      <ToolSection w="w-[187px]" label="OPTIONS">
        <ToolBig w="w-[84px]" lines={["Feature", "Selection"]} icon={<ListDoc />} />
        <div className="pt-[11px]">
          <ToolSmall w="w-[28px]" text="PCA" icon={<svg width="20" height="22" viewBox="0 0 20 22"><rect x="1" y="1" width="18" height="20" fill="#fff" stroke="#666" /><path d="M5 16 L14 5" stroke="#3b8ed3" strokeWidth="2" strokeDasharray="2 2" /></svg>} />
          <ToolSmall w="w-[28px]" text="Optimizer" icon={<svg width="20" height="22" viewBox="0 0 20 22"><circle cx="10" cy="11" r="8" fill="none" stroke="#555" strokeWidth="3" strokeDasharray="3 1" /><circle cx="10" cy="11" r="5" fill="none" stroke="#777" strokeWidth="2" /></svg>} />
        </div>
      </ToolSection>
      <ToolSection w="w-[612px]" label="MODELS">
        <div className="w-[5px]" />
        <Gallery
          outerW="w-[437px]"
          whiteW="w-[413px]"
          items={[
            { icon: <PlotThumb kind="quick" />, lines: ["All Quick-To-", "Train"] },
            { icon: <PlotThumb kind="all" />, lines: ["All"] },
            { icon: <PlotThumb kind="scatter" />, lines: ["Linear"] },
            { icon: <PlotThumb kind="interact" />, lines: ["Interactions", "Linear"] },
          ]}
        />
        <div className="ml-[8px] w-[92px] -mt-[4px]">
          <ToolSmall w="w-[27px]" text="Summary" icon={<svg width="20" height="24" viewBox="0 0 20 24"><rect x="1" y="1" width="18" height="22" fill="#fff" stroke="#777" /><rect x="3" y="5" width="6" height="4" fill="#3b8ed3" /><rect x="3" y="13" width="6" height="4" fill="#e0703a" /><path d="M11 7 H17 M11 15 H17" stroke="#999" /></svg>} />
          <ToolSmall w="w-[27px]" text="Duplicate" icon={<svg width="18" height="24" viewBox="0 0 18 24"><path d="M1 1 H10 V17 H1 Z" fill="#f2f2f2" stroke="#888" /><path d="M6 7 H14 L17 10 V23 H6 Z" fill="#fff" stroke="#777" /><path d="M8 13 H15 M8 16 H15 M8 19 H15" stroke="#999" /></svg>} />
          <ToolSmall w="w-[27px]" text="Delete" disabled icon={<Trash size={22} />} />
        </div>
        <ToolBig w="w-[70px]" lines={["Results", "Table"]} icon={<WindowGrid size={28} />} />
      </ToolSection>
      <ToolSection w="w-[117px]" label="TRAIN">
        <div className="ml-[5px] w-[59px] h-[90px] -mt-[5px] bg-[#d4d4d4] border border-[#9a9a9a] rounded-[4px] flex flex-col items-center text-[#333] shrink-0">
          <div className="h-[46px] flex items-center justify-center pt-[3px]">
            <svg width="30" height="30" viewBox="0 0 30 30">
              {[1, 8.5, 16, 23.5].map((x) => (
                <rect key={x} x={x} y="1" width="5" height="28" fill="#5a8db8" stroke="#3f6d96" strokeWidth="0.8" />
              ))}
            </svg>
          </div>
          <div className="leading-[20px]">Use</div>
          <div className="leading-[20px]">Parallel</div>
        </div>
        <ToolBig w="w-[44px]" caret lines={["Train", "All"]} icon={<PlayIcon />} />
      </ToolSection>
      <ToolSection w="w-[408px]" label="PLOT AND INTERPRET">
        <div className="w-[4px]" />
        <Gallery
          outerW="w-[339px]"
          whiteW="w-[314px]"
          items={[
            { icon: <PlotThumb kind="response" />, lines: ["Response"] },
            { icon: <PlotThumb kind="pred" />, lines: ["Predicted vs.", "Actual   ..."] },
            { icon: <PlotThumb kind="resid" />, lines: ["Residuals", "(Validation)"] },
          ]}
        />
        <div className="ml-[6px]">
          <ToolBig w="w-[50px]" lines={["Layout", <Caret key="c" color="#555" />]} icon={<WindowGrid size={30} rows={2} cols={2} />} />
        </div>
      </ToolSection>
      <ToolSection w="w-[117px]" label="TEST">
        <ToolBig
          w="w-[66px]"
          caret
          lines={["Test", "Data"]}
          icon={
            <svg width="30" height="38" viewBox="0 0 30 38">
              <rect x="1" y="22" width="28" height="15" fill="#d6d6d6" stroke="#777" />
              <path d="M11 1 H19 V16 H26 L15 30 L4 16 H11 Z" fill="#68b02f" stroke="#3d7a14" />
            </svg>
          }
        />
        <ToolBig w="w-[46px]" disabled caret lines={["Test", "All"]} icon={<PlayIcon faded />} />
      </ToolSection>
      <ToolSection w="w-[243px]" label="EXPORT">
        <ToolBig w="w-[92px]" disabled lines={["Export Plot", "to Figure"]} icon={<ExportIcon plot />} />
        <ToolBig w="w-[72px]" disabled lines={["Generate", "Function"]} icon={<ExportIcon plot={false} />} />
        <ToolBig
          w="w-[76px]"
          disabled
          caret
          lines={["Export", "Model"]}
          icon={
            <svg width="32" height="32" viewBox="0 0 32 32" opacity="0.45">
              <path d="M2 18 L10 12 L14 18 L28 2 L30 6 L14 30 Z" fill="#9ccc6a" stroke="#6fa040" />
            </svg>
          }
        />
      </ToolSection>
      <div className="flex-1 flex items-end justify-end pb-[4px] pr-[6px]">
        <svg width="15" height="18" viewBox="0 0 15 18">
          <rect x="1" y="0" width="13" height="3" fill="#9aa7b3" />
          <path d="M1 18 L7.5 6 L14 18 Z" fill="#9aa7b3" />
        </svg>
      </div>
    </div>
  )
}

/* ---------- regression learner body ---------- */

function PanelDot() {
  return (
    <span className="w-[13px] h-[13px] rounded-full bg-[#8f8f8f] flex items-center justify-center">
      <Caret color="#fff" className="scale-[0.6]" />
    </span>
  )
}

function ModelsPanel() {
  return (
    <div className="w-[480px] h-full border-r border-[#8a8a8a] flex flex-col shrink-0 bg-[#f0f0f0]">
      <div className="h-[28px] bg-white flex items-center pl-[10px] pr-[20px] text-[16px] text-[#333] shrink-0">
        Models
        <span className="ml-auto"><PanelDot /></span>
      </div>
      <div className="h-[36px] border-y-2 border-[#8a8a8a] flex items-center pl-[14px] text-[15px] text-[#333] shrink-0">
        Sort by
        <div className="ml-[9px] w-[188px] h-[27px] border border-[#9a9a9a] bg-[#f6f6f6] rounded-[5px] flex items-center pl-[6px] pr-[9px]">
          Model Number
          <Caret color="#555" className="ml-auto scale-125" />
        </div>
        <span className="ml-[2px] w-[27px] h-[27px] border border-[#9a9a9a] rounded-[6px] bg-[#f6f6f6] flex items-center justify-center font-bold text-[20px] leading-none">↓</span>
        <span className="ml-[3px] w-[27px] h-[27px] border border-[#9a9a9a] rounded-[6px] bg-[#f6f6f6] flex items-center justify-center font-bold text-[20px] leading-none">↑</span>
        <span className="ml-[122px] w-[27px] h-[27px] border border-[#d0d0d0] rounded-[6px] flex items-center justify-center"><Trash size={20} /></span>
      </div>
      <div className="h-[62px] bg-[#bedcf1] border-b-2 border-x border-[#8a8a8a] px-[3px] pt-[3px] text-[15px] text-[#333] shrink-0">
        <div className="h-[28px] flex items-center">
          <span className="w-[27px] h-[27px] border border-[#9a9a9a] rounded-[5px] bg-[#eef3f6] flex items-center justify-center">
            <Star size={21} color="#c9c9c9" strokeWidth={1.4} />
          </span>
          <span className="ml-[7px] font-bold text-[#222]">1</span>
          <span className="ml-[9px]">Tree</span>
          <span className="ml-auto mr-[3px]">Draft</span>
        </div>
        <div className="h-[26px] mt-[1px] flex items-center justify-between">
          <span>Last change: Fine Tree</span>
          <span>61/61 features</span>
        </div>
      </div>
    </div>
  )
}

function RoundBtn({ w, text, tone = "normal" }: { w: string; text: string; tone?: "normal" | "on" | "off" }) {
  const look = tone === "on" ? "bg-[#d6d6d6] border-[#8f8f8f] text-[#333]" : tone === "off" ? "bg-[#f3f3f3] border-[#cfcfcf] text-[#a8a8a8]" : "bg-[#f6f6f6] border-[#8f8f8f] text-[#222]"
  return <div className={`${w} border rounded-[5px] flex items-center justify-center text-[15px] shrink-0 ${look}`}>{text}</div>
}

function ImportanceChart() {
  const left = 48
  const top = 33
  const width = 736
  const height = 513
  const xTicks = [0, 1, 2, 3, 4, 5, 6]
  return (
    <svg width="800" height="600" viewBox="0 0 800 600" className="block">
      <text x="416" y="26" textAnchor="middle" fontSize="18.2" fontWeight="700" fill="#1a1a1a" fontFamily="Liberation Sans">
        Feature importance scores sorted using F Test algorithm
      </text>
      <rect x={left} y={top} width={width} height={height} fill="#fff" stroke="#4d4d4d" />
      {bars.map((v, i) => {
        const cy = 86.7 + i * 45
        return (
          <g key={i}>
            <rect x={left} y={cy - 18} width={(v / 6) * width} height={36} fill="#0072bd" stroke="#14304a" />
            <path d={`M${left} ${cy} h7 M${left + width} ${cy} h-7`} stroke="#4d4d4d" />
          </g>
        )
      })}
      {xTicks.map((t) => {
        const x = left + (t / 6) * width
        return (
          <g key={t}>
            <path d={`M${x} ${top} v7 M${x} ${top + height} v-7`} stroke="#4d4d4d" />
            <text x={x} y={569} textAnchor="middle" fontSize="16" fill="#404040" fontFamily="Liberation Sans">
              {t}
            </text>
          </g>
        )
      })}
      <text x="416" y="592" textAnchor="middle" fontSize="18" fill="#404040" fontFamily="Liberation Sans">
        Importance scores
      </text>
      <text transform="translate(30 289) rotate(-90)" textAnchor="middle" fontSize="18" fill="#404040" fontFamily="Liberation Sans">
        Features
      </text>
    </svg>
  )
}

function Radio({ on = false }: { on?: boolean }) {
  return (
    <span className="w-[18px] h-[18px] rounded-full border border-[#666] bg-white flex items-center justify-center shrink-0">
      {on && <span className="w-[10px] h-[10px] rounded-full bg-[#222]" />}
    </span>
  )
}

function FeatureTable() {
  return (
    <div className="mt-[13px] w-[418px] h-[518px] border border-[#8f8f8f] bg-white flex overflow-hidden text-[15px] text-[#333]">
      <div className="w-[381px] shrink-0">
        <div className="h-[34px] flex bg-[#f5f5f5] border-b border-[#777] font-bold">
          <div className="w-[50px] border-r border-[#777]" />
          <div className="w-[18px] border-r border-[#777]" />
          <div className="w-[243px] border-r border-[#777] flex items-center pl-[4px]">Features</div>
          <div className="w-[70px] flex items-center pl-[5px] whitespace-pre">F Test</div>
        </div>
        {features.map(([name, score], i) => (
          <div key={name} className={`h-[29px] flex items-center border-b border-[#777] ${i === 6 ? "bg-[#d0d0d0]" : "bg-white"}`}>
            <div className="w-[50px] h-full border-r border-[#777] flex items-center justify-center text-[#666]">{i + 1}</div>
            <div className="w-[18px] h-full border-r border-[#777] flex items-center pl-[4px]">
              <span className="w-[10px] h-[16px] border border-[#c8c8c8] bg-white flex items-end justify-center text-[#888] text-[9px] leading-[9px]">{i < 10 ? "⌄" : ""}</span>
            </div>
            <div className="w-[243px] h-full border-r border-[#777] flex items-center pl-[4px] whitespace-nowrap overflow-hidden">{name}</div>
            <div className="w-[70px] flex justify-end pr-[4px]">{score}</div>
          </div>
        ))}
      </div>
      <div className="w-[22px] shrink-0 border-l border-[#777] border-r flex flex-col">
        <div className="h-[34px] bg-[#f5f5f5] border-b border-[#777] shrink-0" />
        <div className="flex-1 flex flex-col items-center bg-white px-[2px]">
          <Caret color="#bdbdbd" className="mt-[9px] rotate-180 scale-x-125" />
          <span className="mt-[8px] w-full h-[120px] bg-[#c4c4c4]" />
          <Caret color="#555" className="mt-auto mb-[9px] scale-x-125" />
        </div>
      </div>
    </div>
  )
}

function FeatureSelection() {
  return (
    <div className="ml-[20px] w-[418px] pt-[26px] text-[15px] text-[#333] shrink-0">
      <div className="h-[20px] leading-[20px] text-[17.5px] font-bold text-[#1a1a1a]">Feature Selection</div>
      <div className="mt-[15px] h-[20px] flex items-center gap-[4px]">
        <Radio on />
        Select highest ranked features
      </div>
      <div className="mt-[6px] h-[24px] flex items-center">
        Num features to keep
        <div className="ml-auto mr-[33px] w-[199px] h-[24px] border border-[#8f8f8f] bg-white rounded-r-[5px] flex">
          <span className="flex-1 flex items-center justify-end pr-[4px]">10</span>
          <span className="w-[26px] border-l border-[#8f8f8f] flex flex-col items-center justify-center gap-[3px]">
            <Caret color="#555" className="rotate-180" />
            <Caret color="#555" />
          </span>
        </div>
      </div>
      <div className="mt-[25px] h-[20px] flex items-center gap-[4px]">
        <Radio />
        Select individual features
      </div>
      <div className="mt-[18px] h-[27px] flex justify-between">
        <RoundBtn w="w-[203px]" tone="off" text="Add All" />
        <RoundBtn w="w-[203px]" tone="off" text="Remove All" />
      </div>
      <FeatureTable />
      <div className="mt-[12px] h-[28px] flex items-center justify-between">
        <a className="font-bold text-[#0b66c3] underline tracking-[0.1px]">How to select features?</a>
        <RoundBtn w="w-[203px] h-[28px]" text="Save and Apply" />
      </div>
    </div>
  )
}

function RegressionLearner() {
  return (
    <div className="w-[1920px] h-[1080px] flex flex-col font-['Liberation_Sans',Arial,sans-serif]">
      <div className="h-[29px] flex items-center bg-white shrink-0">
        <span className="ml-[2px]"><MatlabLogo size={20} /></span>
        <span className="ml-[3px] text-[15px] text-[#8a8a8a] font-['Noto_Sans',sans-serif] tracking-[-0.3px]">Regression Learner - untitled*</span>
        <div className="ml-auto flex items-center">
          <Minus size={14} color="#999" strokeWidth={1.2} />
          <Copy size={14} color="#999" strokeWidth={1.2} className="ml-[44px] -scale-x-100" />
          <X size={16} color="#999" strokeWidth={1.1} className="ml-[42px] mr-[24px]" />
        </div>
      </div>
      <div className="h-[35px] bg-[#03427a] flex items-end shrink-0">
        <div className="ml-[3px] w-[152px] h-[31px] bg-[#f5f5f5] rounded-t-[2px] flex items-center justify-center text-[12px] text-[#222]">REGRESSION LEARNER</div>
        <div className="ml-auto mb-[4px] mr-[12px] w-[53px] h-[27px] bg-[#5e87ab] [clip-path:polygon(8px_0,100%_0,100%_100%,8px_100%,0_50%)] flex items-center justify-center pl-[12px]">
          <span className="w-[19px] h-[19px] rounded-full bg-white text-[#03427a] font-bold text-[15px] flex items-center justify-center">?</span>
        </div>
      </div>
      <Toolstrip />
      <div className="flex-1 flex min-h-0">
        <ModelsPanel />
        <div className="flex-1 flex flex-col bg-[#f0f0f0] min-w-0">
          <div className="h-[28px] bg-white border-b border-[#c8c8c8] flex items-stretch text-[15px] shrink-0">
            <div className="w-[14px] flex items-center justify-center">
              <span className="w-[5px] h-[18px] border-y-2 border-dotted border-[#b5b5b5] bg-[#e8e8e8]" />
            </div>
            <div className="w-[88px] bg-[#e6e6e6] border-t-[3px] border-[#8c8c8c] flex items-center pl-[10px] text-[#555]">Model 1</div>
            <div className="ml-[7px] w-[204px] bg-white border-t-[3px] border-r border-[#03427a] border-r-[#d0d0d0] flex items-center pl-[10px] text-[#333]">
              Default Feature Selection
              <X size={13} color="#999" strokeWidth={3} className="ml-[9px]" />
            </div>
            <span className="ml-auto mr-[20px] self-center"><PanelDot /></span>
          </div>
          <div className="flex-1 flex min-h-0">
            <div className="w-[979px] pl-[23px] pt-[25px] shrink-0">
              <div className="h-[20px] leading-[20px] text-[17.5px] font-bold text-[#1a1a1a]">Feature Ranking Algorithm</div>
              <div className="mt-[46px] h-[28px] flex">
                <RoundBtn w="w-[106px]" text="None" />
                <RoundBtn w="w-[106px] ml-[5px]" text="MRMR" />
                <RoundBtn w="w-[106px] ml-[7px]" tone="on" text="F Test" />
                <RoundBtn w="w-[106px] ml-[6px]" tone="off" text="RReliefF" />
              </div>
              <div className="mt-[38px] ml-[76px]">
                <ImportanceChart />
              </div>
            </div>
            <FeatureSelection />
          </div>
        </div>
      </div>
      <div className="h-[27px] bg-[#e6e6e6] border-t border-[#a8a8a8] flex items-center text-[14.8px] text-[#333] shrink-0">
        <div className="w-[480px] h-full border-r border-[#a8a8a8] flex items-center pl-[10px]">
          <svg width="10" height="15" viewBox="0 0 10 15">
            <rect x="0" y="0" width="2.5" height="15" fill="#aaa" />
            <path d="M10 0 V15 L3.5 7.5 Z" fill="#aaa" />
          </svg>
        </div>
        <span className="ml-[10px] w-[182px]">Data set: Data_Calcium</span>
        <span className="w-[145px]">Observations: 101</span>
        <span className="w-[98px]">Size: 77 kB</span>
        <span className="w-[117px]">Predictors: 61</span>
        <span className="w-[266px]">Response: ECG_Data_Value</span>
        <span>Validation: 5-fold cross-validation</span>
      </div>
      <RightTaskbar />
    </div>
  )
}

export default function App() {
  return (
    <div className="w-[3840px] h-[2152px] bg-white overflow-hidden">
      <div className="flex h-[1080px]">
        <div className="w-[1920px] flex flex-col">
          <Explorer />
          <LeftTaskbar />
        </div>
        <RegressionLearner />
      </div>
    </div>
  )
}
